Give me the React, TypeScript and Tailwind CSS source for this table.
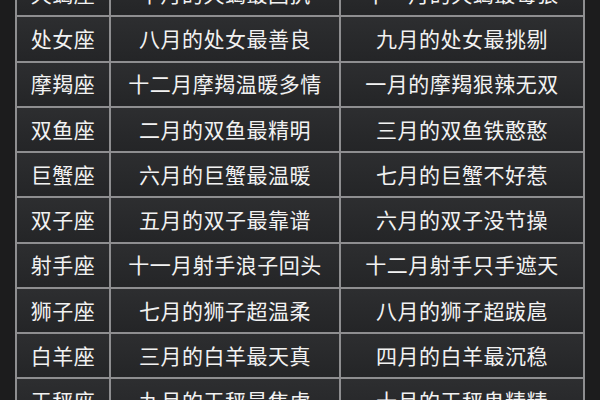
const rows: [string, string, string][] = [
  ['天蝎座', '十月的天蝎最固执', '十一月的天蝎最毒狠'],
  ['处女座', '八月的处女最善良', '九月的处女最挑剔'],
  ['摩羯座', '十二月摩羯温暖多情', '一月的摩羯狠辣无双'],
  ['双鱼座', '二月的双鱼最精明', '三月的双鱼铁憨憨'],
  ['巨蟹座', '六月的巨蟹最温暖', '七月的巨蟹不好惹'],
  ['双子座', '五月的双子最靠谱', '六月的双子没节操'],
  ['射手座', '十一月射手浪子回头', '十二月射手只手遮天'],
  ['狮子座', '七月的狮子超温柔', '八月的狮子超跋扈'],
  ['白羊座', '三月的白羊最天真', '四月的白羊最沉稳'],
  ['天秤座', '九月的天秤最焦虑', '十月的天秤鬼精精'],
];

export default function App() {
  return (
    <div
      className="w-[600px] h-[400px] overflow-hidden bg-[#1c1c1d]"
      style={{ fontFamily: '"Noto Sans CJK SC", "Noto Sans", sans-serif' }}
    >
      <div className="ml-[15px] -mt-[30px] w-[570px] grid grid-cols-[92px_228px_242px] auto-rows-[43.25px] gap-[2px] p-[2px] bg-[#8e8e90]">
        {rows.map(([sign, best, worst]) => (
          <div key={sign} className="contents">
            <div className="flex items-center justify-center bg-gradient-to-b from-[#2d2e30] to-[#242527] text-[21px] text-[#f2f2f2] tracking-[0.5px]">
              {sign}
            </div>
            <div className="flex items-center justify-center bg-gradient-to-b from-[#2d2e30] to-[#242527] text-[21px] text-[#f2f2f2] tracking-[0.5px] whitespace-nowrap">
              {best}
            </div>
            <div className="flex items-center justify-center bg-gradient-to-b from-[#2d2e30] to-[#242527] text-[21px] text-[#f2f2f2] tracking-[0.5px] whitespace-nowrap">
              {worst}
            </div>
          </div>
        ))}
      </div>
    </div>
  );
}
